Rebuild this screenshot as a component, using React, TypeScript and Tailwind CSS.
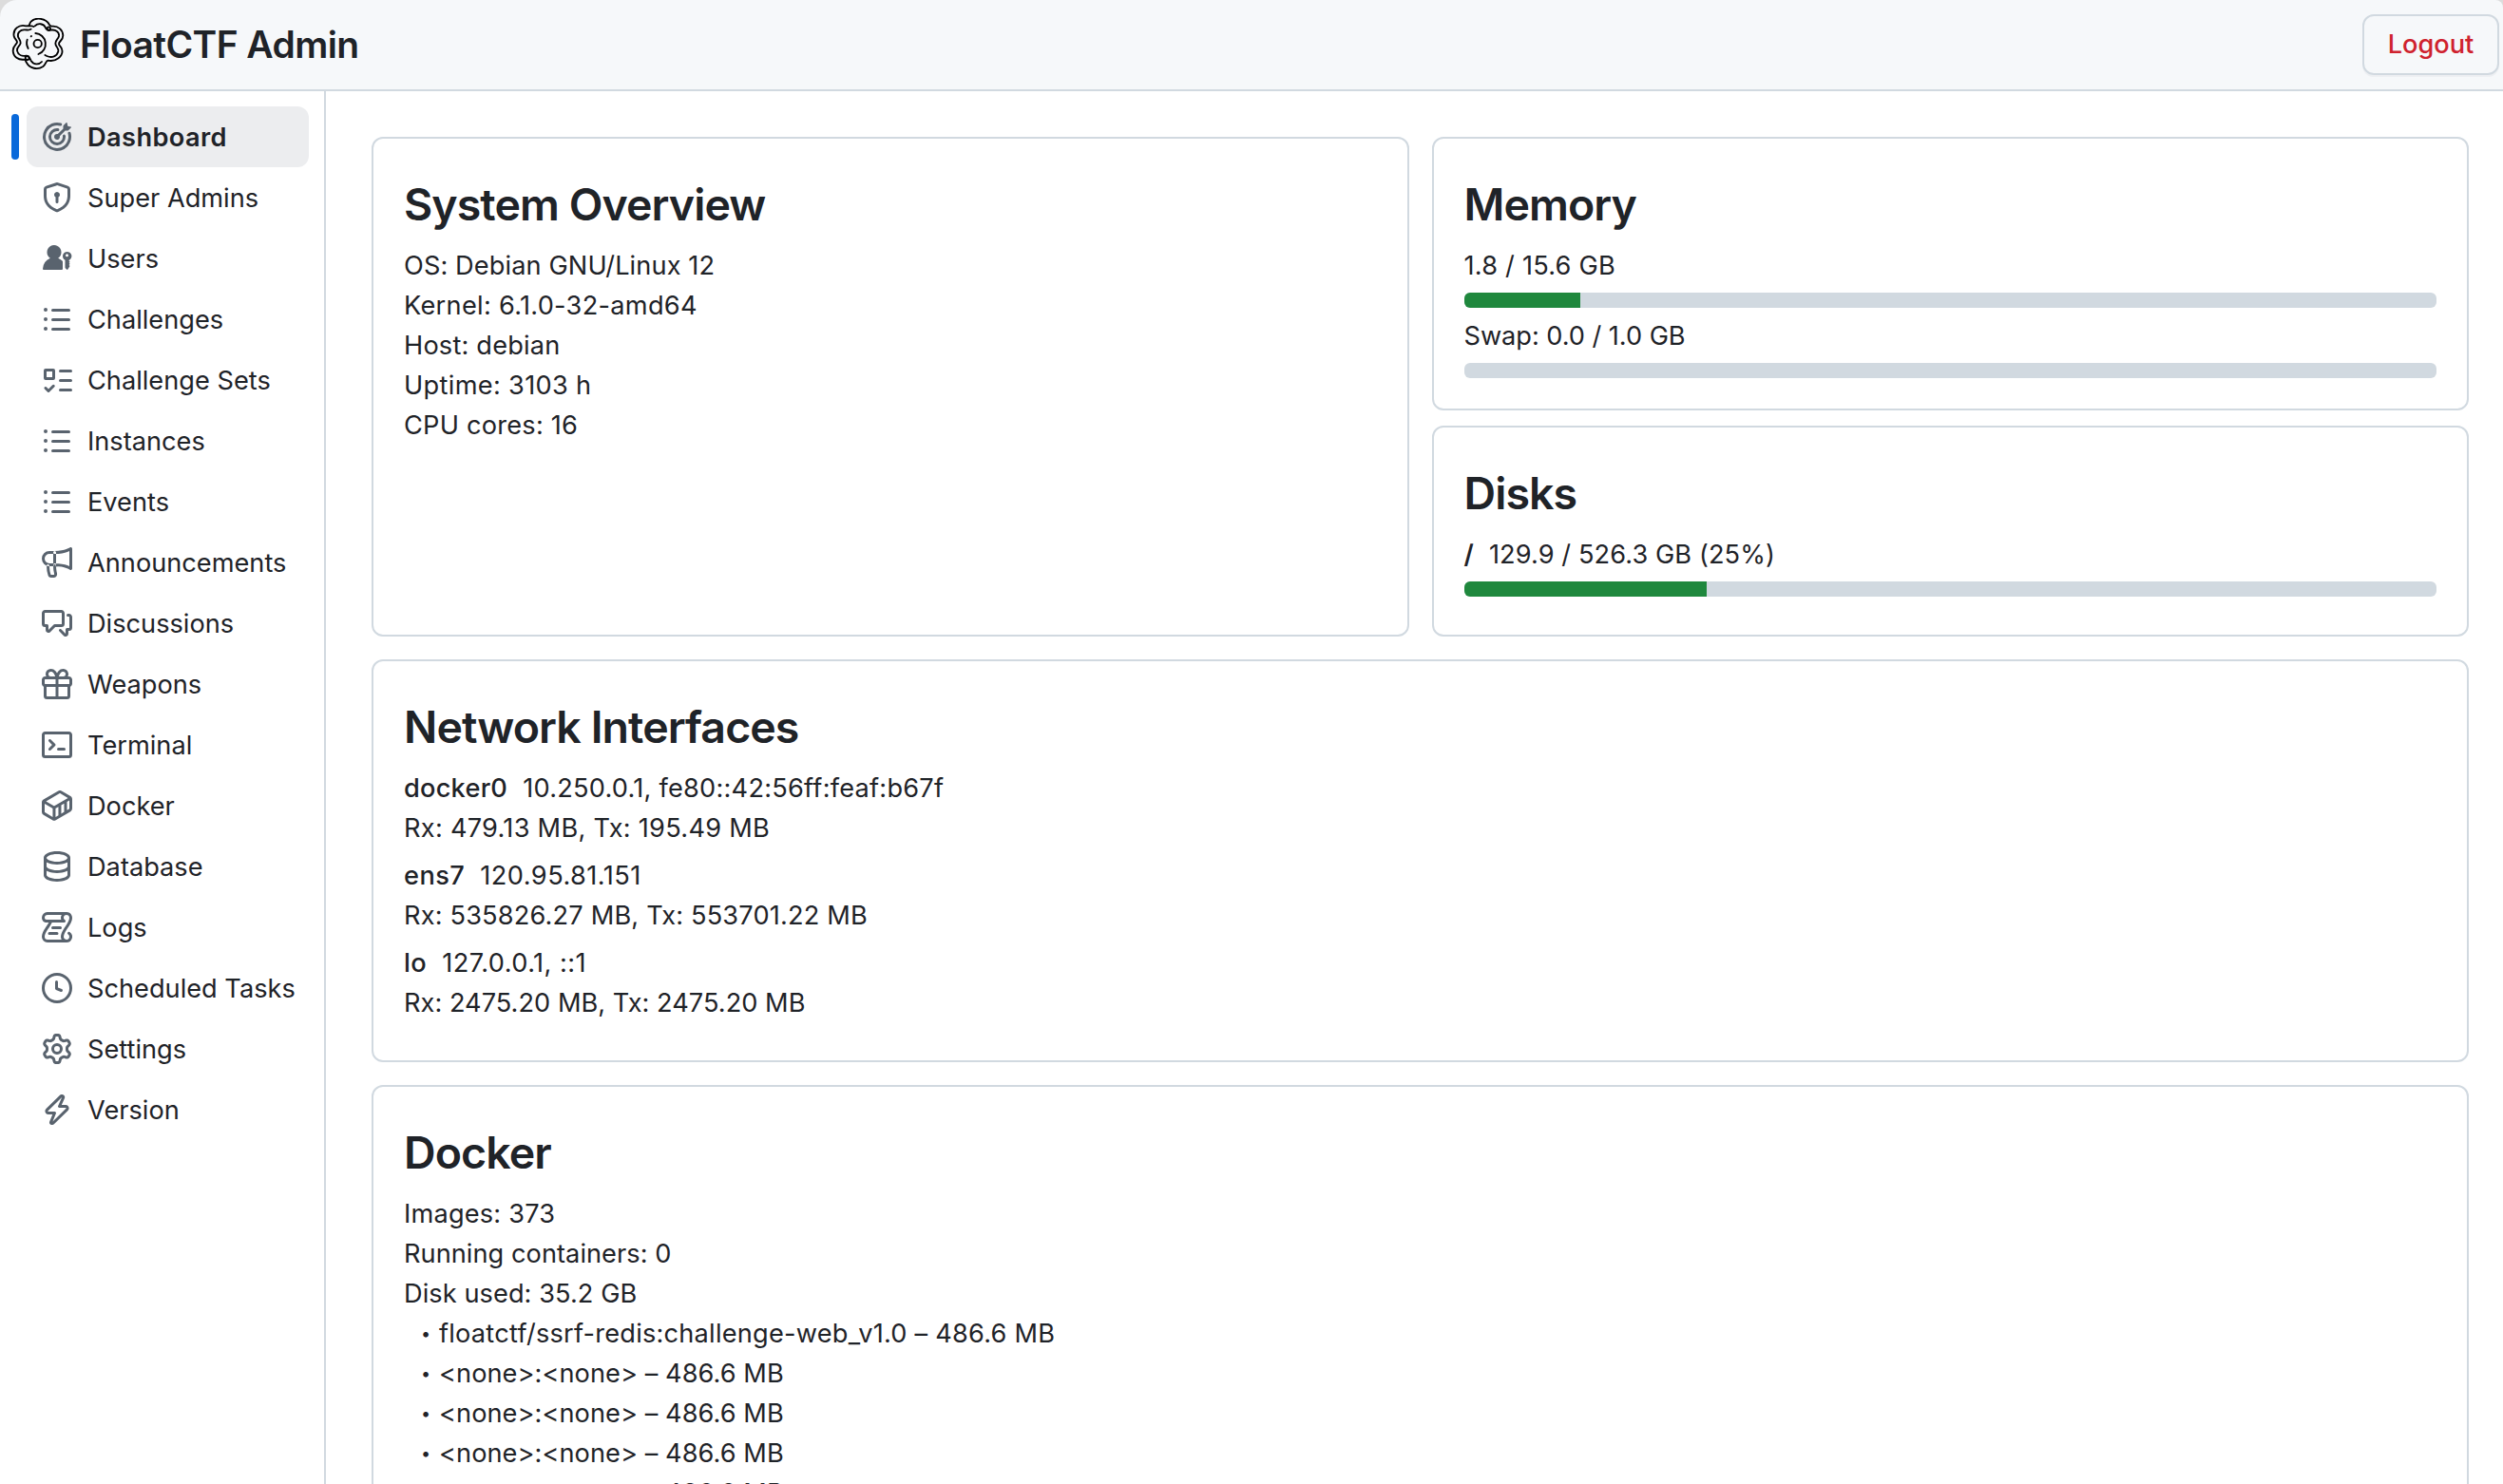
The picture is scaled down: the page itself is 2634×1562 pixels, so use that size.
import type { ReactNode } from "react";

const icons = {
  goal: "M13.637 2.363h-.001l1.676.335c.09.018.164.084.19.173a.25.25 0 0 1-.062.249l-1.373 1.374a.876.876 0 0 1-.619.256H12.31L9.45 7.611A1.5 1.5 0 1 1 6.5 8a1.501 1.501 0 0 1 1.889-1.449l2.861-2.862V2.552c0-.232.092-.455.256-.619L12.88.559a.25.25 0 0 1 .249-.062c.089.026.155.1.173.19ZM2 8a6 6 0 1 0 11.769-1.656.751.751 0 1 1 1.442-.413 7.502 7.502 0 0 1-12.513 7.371A7.501 7.501 0 0 1 10.069.789a.75.75 0 0 1-.413 1.442A6.001 6.001 0 0 0 2 8ZM5 8a3.002 3.002 0 0 0 4.699 2.476 3 3 0 0 0 1.28-2.827.748.748 0 0 1 1.045-.782.75.75 0 0 1 .445.61A4.5 4.5 0 1 1 8.516 3.53a.75.75 0 1 1-.17 1.49A3 3 0 0 0 5 8Z",
  shieldLock:
    "m8.533.133 5.25 1.68A1.75 1.75 0 0 1 15 3.48V7c0 1.566-.32 3.182-1.303 4.682-.983 1.498-2.585 2.813-5.032 3.855a1.697 1.697 0 0 1-1.33 0c-2.447-1.042-4.049-2.357-5.032-3.855C1.32 10.182 1 8.566 1 7V3.48a1.755 1.755 0 0 1 1.217-1.667l5.25-1.68a1.748 1.748 0 0 1 1.066 0Zm-.61 1.429.001.001-5.25 1.68a.251.251 0 0 0-.174.237V7c0 1.36.275 2.666 1.057 3.859.784 1.194 2.121 2.342 4.366 3.298a.196.196 0 0 0 .154 0c2.245-.957 3.582-2.103 4.366-3.297C13.225 9.666 13.5 8.358 13.5 7V3.48a.25.25 0 0 0-.174-.238l-5.25-1.68a.25.25 0 0 0-.153 0ZM9.5 6.5c0 .536-.286 1.032-.75 1.3v2.45a.75.75 0 0 1-1.5 0V7.8A1.5 1.5 0 1 1 9.5 6.5Z",
  passkey:
    "M2.743 4.757a3.757 3.757 0 1 1 5.851 3.119 5.991 5.991 0 0 1 2.15 1.383c.17.17.257.405.257.646v3.598a.5.5 0 0 1-.5.5H1a.5.5 0 0 1-.5-.5 6.5 6.5 0 0 1 3.906-5.627 3.754 3.754 0 0 1-1.663-3.119ZM15.7 6.727c0 .914-.522 1.706-1.284 2.092a.215.215 0 0 0-.122.192v.196c0 .057.023.112.063.152l.33.33a.2.2 0 0 1 0 .283l-.4.4.4.4a.2.2 0 0 1 0 .283l-.4.4.4.4a.2.2 0 0 1 0 .283l-.9 1.5a.6.6 0 0 1-.9 0l-.5-.5a.5.5 0 0 1-.14-.35V9a.215.215 0 0 0-.12-.192A2.345 2.345 0 1 1 15.7 6.727Zm-1.7-.4a.75.75 0 1 0-1.5 0 .75.75 0 0 0 1.5 0Z",
  list: "M5.75 2.5h8.5a.75.75 0 0 1 0 1.5h-8.5a.75.75 0 0 1 0-1.5Zm0 5h8.5a.75.75 0 0 1 0 1.5h-8.5a.75.75 0 0 1 0-1.5Zm0 5h8.5a.75.75 0 0 1 0 1.5h-8.5a.75.75 0 0 1 0-1.5ZM2 14a1 1 0 1 1 0-2 1 1 0 0 1 0 2Zm1-6a1 1 0 1 1-2 0 1 1 0 0 1 2 0ZM2 4a1 1 0 1 1 0-2 1 1 0 0 1 0 2Z",
  tasklist:
    "M2 2h4a1 1 0 0 1 1 1v4a1 1 0 0 1-1 1H2a1 1 0 0 1-1-1V3a1 1 0 0 1 1-1Zm4.655 8.595a.75.75 0 0 1 0 1.06L4.03 14.28a.75.75 0 0 1-1.06 0l-1.5-1.5a.749.749 0 0 1 .326-1.275.749.749 0 0 1 .734.215l.97.97 2.095-2.095a.75.75 0 0 1 1.06 0ZM9.75 2.5h5.5a.75.75 0 0 1 0 1.5h-5.5a.75.75 0 0 1 0-1.5Zm0 5h5.5a.75.75 0 0 1 0 1.5h-5.5a.75.75 0 0 1 0-1.5Zm0 5h5.5a.75.75 0 0 1 0 1.5h-5.5a.75.75 0 0 1 0-1.5Zm-7.25-9v3h3v-3Z",
  megaphone:
    "M3.25 9a.75.75 0 0 1 .75.75c0 2.142.456 3.828.733 4.653a.122.122 0 0 0 .05.064.212.212 0 0 0 .117.033h1.31c.085 0 .18-.042.258-.152a.45.45 0 0 0 .075-.366A16.743 16.743 0 0 1 6 9.75a.75.75 0 0 1 1.5 0c0 1.588.25 2.926.494 3.85.293 1.113-.504 2.4-1.783 2.4H4.9c-.686 0-1.35-.41-1.589-1.12A16.4 16.4 0 0 1 2.5 9.75.75.75 0 0 1 3.25 9ZM0 6a4 4 0 0 1 4-4h2.75a.75.75 0 0 1 .75.75v6.5a.75.75 0 0 1-.75.75H4a4 4 0 0 1-4-4Zm4-2.5a2.5 2.5 0 1 0 0 5h2v-5ZM15.59.082A.75.75 0 0 1 16 .75v10.5a.75.75 0 0 1-1.189.608l-.002-.001h.001l-.014-.01a5.775 5.775 0 0 0-.422-.25 10.63 10.63 0 0 0-1.469-.64C11.576 10.484 9.536 10 6.75 10a.75.75 0 0 1 0-1.5c2.964 0 5.174.516 6.658 1.043.423.151.787.302 1.092.443V2.014c-.305.14-.669.292-1.092.443C11.924 2.984 9.713 3.5 6.75 3.5a.75.75 0 0 1 0-1.5c2.786 0 4.826-.484 6.155-.957.665-.236 1.154-.47 1.47-.64.144-.077.284-.161.421-.25l.014-.01a.75.75 0 0 1 .78-.061Z",
  discussion:
    "M1.75 1h8.5c.966 0 1.75.784 1.75 1.75v5.5A1.75 1.75 0 0 1 10.25 10H7.061l-2.574 2.573A1.458 1.458 0 0 1 2 11.543V10h-.25A1.75 1.75 0 0 1 0 8.25v-5.5C0 1.784.784 1 1.75 1ZM1.5 2.75v5.5c0 .138.112.25.25.25h1a.75.75 0 0 1 .75.75v2.19l2.72-2.72a.749.749 0 0 1 .53-.22h3.5a.25.25 0 0 0 .25-.25v-5.5a.25.25 0 0 0-.25-.25h-8.5a.25.25 0 0 0-.25.25Zm13 2a.25.25 0 0 0-.25-.25h-.5a.75.75 0 0 1 0-1.5h.5c.966 0 1.75.784 1.75 1.75v5.5A1.75 1.75 0 0 1 14.25 12H14v1.543a1.458 1.458 0 0 1-2.487 1.03L9.22 12.28a.749.749 0 0 1 .326-1.275.749.749 0 0 1 .734.215l2.22 2.22v-2.19a.75.75 0 0 1 .75-.75h1a.25.25 0 0 0 .25-.25Z",
  gift: "M2 2.75A2.75 2.75 0 0 1 4.75 0c.983 0 1.873.42 2.57 1.232.268.318.497.668.68 1.042.183-.375.411-.725.68-1.044C9.376.42 10.266 0 11.25 0a2.75 2.75 0 0 1 2.45 4h.55c.966 0 1.75.784 1.75 1.75v2c0 .698-.409 1.301-1 1.582v4.918A1.75 1.75 0 0 1 13.25 16H2.75A1.75 1.75 0 0 1 1 14.25V9.332C.409 9.05 0 8.448 0 7.75v-2C0 4.784.784 4 1.75 4h.55c-.192-.375-.3-.8-.3-1.25ZM7.25 9.5H2.5v4.75c0 .138.112.25.25.25h4.5Zm1.5 0v5h4.5a.25.25 0 0 0 .25-.25V9.5Zm0-4V8h5.5a.25.25 0 0 0 .25-.25v-2a.25.25 0 0 0-.25-.25Zm-7 0a.25.25 0 0 0-.25.25v2c0 .138.112.25.25.25h5.5V5.5h-5.5Zm3-4a1.25 1.25 0 0 0 0 2.5h2.309c-.233-.818-.542-1.401-.878-1.793-.43-.502-.915-.707-1.431-.707ZM8.941 4h2.309a1.25 1.25 0 0 0 0-2.5c-.516 0-1 .205-1.43.707-.337.392-.646.975-.879 1.793Z",
  terminal:
    "M0 2.75C0 1.784.784 1 1.75 1h12.5c.966 0 1.75.784 1.75 1.75v10.5A1.75 1.75 0 0 1 14.25 15H1.75A1.75 1.75 0 0 1 0 13.25Zm1.75-.25a.25.25 0 0 0-.25.25v10.5c0 .138.112.25.25.25h12.5a.25.25 0 0 0 .25-.25V2.75a.25.25 0 0 0-.25-.25ZM7.25 8a.749.749 0 0 1-.22.53l-2.25 2.25a.749.749 0 0 1-1.275-.326.749.749 0 0 1 .215-.734L5.44 8 3.72 6.28a.749.749 0 0 1 .326-1.275.749.749 0 0 1 .734.215l2.25 2.25c.141.14.22.331.22.53Zm1.5 1.5h3a.75.75 0 0 1 0 1.5h-3a.75.75 0 0 1 0-1.5Z",
  container:
    "m10.41.24 4.711 2.774c.544.316.878.897.879 1.526v5.01a1.77 1.77 0 0 1-.88 1.53l-7.753 4.521-.002.001a1.769 1.769 0 0 1-1.774 0H5.59L.873 12.85A1.761 1.761 0 0 1 0 11.327V6.292c0-.304.078-.598.22-.855l.004-.005.01-.019c.15-.262.369-.486.64-.643L8.641.239a1.752 1.752 0 0 1 1.765 0l.002.001ZM9.397 1.534l-7.17 4.182 4.116 2.388a.27.27 0 0 0 .269 0l7.152-4.148-4.115-2.422a.252.252 0 0 0-.252 0Zm-7.768 10.02 4.1 2.393V9.474a1.807 1.807 0 0 1-.138-.072L1.5 7.029v4.298c0 .095.05.181.129.227Zm8.6.642 1.521-.887v-4.45l-1.521.882ZM7.365 9.402h.001c-.044.026-.09.049-.136.071v4.472l1.5-.875V8.61Zm5.885 1.032 1.115-.65h.002a.267.267 0 0 0 .133-.232V5.264l-1.25.725Z",
  database:
    "M1 3.5c0-.626.292-1.165.7-1.59.406-.422.956-.767 1.579-1.041C4.525.32 6.195 0 8 0c1.805 0 3.475.32 4.722.869.622.274 1.172.62 1.578 1.04.408.426.7.965.7 1.591v9c0 .626-.292 1.165-.7 1.59-.406.422-.956.767-1.579 1.041C11.476 15.68 9.806 16 8 16c-1.805 0-3.475-.32-4.721-.869-.623-.274-1.173-.62-1.579-1.04-.408-.426-.7-.965-.7-1.591Zm1.5 0c0 .133.058.318.282.551.227.237.591.483 1.101.707C4.898 5.205 6.353 5.5 8 5.5c1.646 0 3.101-.295 4.118-.742.508-.224.873-.471 1.1-.708.224-.232.282-.417.282-.55 0-.133-.058-.318-.282-.551-.227-.237-.591-.483-1.101-.707C11.102 1.795 9.647 1.5 8 1.5c-1.646 0-3.101.295-4.118.742-.508.224-.873.471-1.1.708-.224.232-.282.417-.282.55Zm0 4.5c0 .133.058.318.282.551.227.237.591.483 1.101.707C4.898 9.705 6.353 10 8 10c1.646 0 3.101-.295 4.118-.742.508-.224.873-.471 1.1-.708.224-.232.282-.417.282-.55V5.724c-.241.15-.503.286-.778.407C11.475 6.68 9.805 7 8 7c-1.805 0-3.475-.32-4.721-.869a6.15 6.15 0 0 1-.779-.407Zm0 2.225V12.5c0 .133.058.318.282.55.227.237.592.484 1.1.708 1.016.447 2.471.742 4.118.742 1.647 0 3.102-.295 4.117-.742.51-.224.874-.47 1.101-.707.224-.233.282-.418.282-.551v-2.275c-.241.15-.503.285-.778.406-1.247.549-2.917.869-4.722.869-1.805 0-3.475-.32-4.721-.869a6.327 6.327 0 0 1-.779-.406Z",
  log: "M5 8.25a.75.75 0 0 1 .75-.75h4a.75.75 0 0 1 0 1.5h-4A.75.75 0 0 1 5 8.25ZM4 10.5A.75.75 0 0 0 4 12h4a.75.75 0 0 0 0-1.5H4ZM13-.005c1.654 0 3 1.328 3 3 0 .982-.338 1.933-.783 2.818-.443.879-1.028 1.758-1.582 2.588l-.011.017c-.568.853-1.104 1.659-1.501 2.446-.398.789-.623 1.494-.623 2.136a1.5 1.5 0 1 0 2.333-1.248.75.75 0 0 1 .834-1.246A3 3 0 0 1 13 16H3a3 3 0 0 1-3-3c0-1.582.891-3.135 1.777-4.506.209-.322.418-.637.623-.946.473-.709.923-1.386 1.287-2.048H2.51c-.576 0-1.381-.133-1.907-.783A2.68 2.68 0 0 1 0 2.995a3 3 0 0 1 3-3Zm0 1.5a1.5 1.5 0 0 0-1.5 1.5c0 .476.223.834.667 1.132A.75.75 0 0 1 11.75 5.495H5.368c-.467 1.003-1.141 2.015-1.773 2.963-.192.289-.381.571-.558.845C2.13 10.711 1.5 11.916 1.5 13A1.5 1.5 0 0 0 3 14.5h7.401A2.989 2.989 0 0 1 10 13c0-.979.338-1.928.784-2.812.441-.874 1.023-1.748 1.575-2.576l.017-.026c.568-.853 1.103-1.658 1.501-2.448.398-.79.623-1.497.623-2.143 0-.838-.669-1.5-1.5-1.5Zm-10 0a1.5 1.5 0 0 0-1.5 1.5c0 .321.1.569.27.778.097.12.325.227.74.227h7.674A2.737 2.737 0 0 1 10 2.995c0-.546.146-1.059.401-1.5Z",
  clock:
    "M8 0a8 8 0 1 1 0 16A8 8 0 0 1 8 0ZM1.5 8a6.5 6.5 0 1 0 13 0 6.5 6.5 0 0 0-13 0Zm7-3.25v2.992l2.028.812a.75.75 0 0 1-.557 1.392l-2.5-1A.751.751 0 0 1 7 8.25v-3.5a.75.75 0 0 1 1.5 0Z",
  gear: "M8 0a8.2 8.2 0 0 1 .701.031C9.444.095 9.99.645 10.16 1.29l.288 1.107c.018.066.079.158.212.224.231.114.454.243.668.386.123.082.233.09.299.071l1.103-.303c.644-.176 1.392.021 1.82.63.27.385.506.792.704 1.218.315.675.111 1.422-.364 1.891l-.814.806c-.049.048-.098.147-.088.294.016.257.016.515 0 .772-.01.147.038.246.088.294l.814.806c.475.469.679 1.216.364 1.891a7.977 7.977 0 0 1-.704 1.217c-.428.61-1.176.807-1.82.63l-1.102-.302c-.067-.019-.177-.011-.3.071a5.909 5.909 0 0 1-.668.386c-.133.066-.194.158-.211.224l-.29 1.106c-.168.646-.715 1.196-1.458 1.26a8.006 8.006 0 0 1-1.402 0c-.743-.064-1.289-.614-1.458-1.26l-.289-1.106c-.018-.066-.079-.158-.212-.224a5.738 5.738 0 0 1-.668-.386c-.123-.082-.233-.09-.299-.071l-1.103.303c-.644.176-1.392-.021-1.82-.63a8.12 8.12 0 0 1-.704-1.218c-.315-.675-.111-1.422.363-1.891l.815-.806c.05-.048.098-.147.088-.294a6.214 6.214 0 0 1 0-.772c.01-.147-.038-.246-.088-.294l-.815-.806C.635 6.045.431 5.298.746 4.623a7.92 7.92 0 0 1 .704-1.217c.428-.61 1.176-.807 1.82-.63l1.102.302c.067.019.177.011.3-.071.214-.143.437-.272.668-.386.133-.066.194-.158.211-.224l.29-1.106C6.009.645 6.556.095 7.299.03 7.53.01 7.764 0 8 0Zm-.571 1.525c-.036.003-.108.036-.137.146l-.289 1.105c-.147.561-.549.967-.998 1.189-.173.086-.34.183-.5.29-.417.278-.97.423-1.529.27l-1.103-.303c-.109-.03-.175.016-.195.045-.22.312-.412.644-.573.99-.014.031-.021.11.059.19l.815.806c.411.406.562.957.53 1.456a4.709 4.709 0 0 0 0 .582c.032.499-.119 1.05-.53 1.456l-.815.806c-.081.08-.073.159-.059.19.162.346.353.677.573.989.02.03.085.076.195.046l1.102-.303c.56-.153 1.113-.008 1.53.27.161.107.328.204.501.29.447.222.85.629.997 1.189l.289 1.105c.029.109.101.143.137.146a6.6 6.6 0 0 0 1.142 0c.036-.003.108-.036.137-.146l.289-1.105c.147-.561.549-.967.998-1.189.173-.086.34-.183.5-.29.417-.278.97-.423 1.529-.27l1.103.303c.109.029.175-.016.195-.045.22-.313.411-.644.573-.99.014-.031.021-.11-.059-.19l-.815-.806c-.411-.406-.562-.957-.53-1.456a4.709 4.709 0 0 0 0-.582c-.032-.499.119-1.05.53-1.456l.815-.806c.081-.08.073-.159.059-.19a6.464 6.464 0 0 0-.573-.989c-.02-.03-.085-.076-.195-.046l-1.102.303c-.56.153-1.113.008-1.53-.27a4.44 4.44 0 0 0-.501-.29c-.447-.222-.85-.629-.997-1.189l-.289-1.105c-.029-.11-.101-.143-.137-.146a6.6 6.6 0 0 0-1.142 0ZM11 8a3 3 0 1 1-6 0 3 3 0 0 1 6 0ZM9.5 8a1.5 1.5 0 1 0-3.001.001A1.5 1.5 0 0 0 9.5 8Z",
  zap: "M9.504.43a1.516 1.516 0 0 1 2.437 1.713L10.415 5.5h2.123c1.57 0 2.346 1.909 1.22 3.004l-7.34 7.142a1.249 1.249 0 0 1-.871.354h-.302a1.25 1.25 0 0 1-1.157-1.723L5.633 10.5H3.462c-1.57 0-2.346-1.909-1.22-3.004L9.503.429Zm1.047 1.074L3.286 8.571A.25.25 0 0 0 3.462 9H6.75a.75.75 0 0 1 .694 1.034l-1.713 4.188 6.982-6.793A.25.25 0 0 0 12.538 7H9.25a.75.75 0 0 1-.683-1.06l2.008-4.418.003-.006a.036.036 0 0 0-.004-.009l-.006-.006-.008-.001c-.003 0-.006.002-.009.004Z",
};

interface NavEntry {
  label: string;
  icon: keyof typeof icons;
}

const navEntries: NavEntry[] = [
  { label: "Dashboard", icon: "goal" },
  { label: "Super Admins", icon: "shieldLock" },
  { label: "Users", icon: "passkey" },
  { label: "Challenges", icon: "list" },
  { label: "Challenge Sets", icon: "tasklist" },
  { label: "Instances", icon: "list" },
  { label: "Events", icon: "list" },
  { label: "Announcements", icon: "megaphone" },
  { label: "Discussions", icon: "discussion" },
  { label: "Weapons", icon: "gift" },
  { label: "Terminal", icon: "terminal" },
  { label: "Docker", icon: "container" },
  { label: "Database", icon: "database" },
  { label: "Logs", icon: "log" },
  { label: "Scheduled Tasks", icon: "clock" },
  { label: "Settings", icon: "gear" },
  { label: "Version", icon: "zap" },
];

const interfaces = [
  {
    name: "docker0",
    addresses: "10.250.0.1, fe80::42:56ff:feaf:b67f",
    traffic: "Rx: 479.13 MB, Tx: 195.49 MB",
    addressClass: "tracking-[0.23px]",
    trafficClass: "tracking-[0.27px]",
  },
  {
    name: "ens7",
    addresses: "120.95.81.151",
    traffic: "Rx: 535826.27 MB, Tx: 553701.22 MB",
    addressClass: "tracking-[0.45px]",
    trafficClass: "tracking-[0.16px]",
  },
  {
    name: "lo",
    addresses: "127.0.0.1, ::1",
    traffic: "Rx: 2475.20 MB, Tx: 2475.20 MB",
    addressClass: "tracking-[0.45px]",
    trafficClass: "tracking-[0.02px]",
  },
];

const images = [
  "floatctf/ssrf-redis:challenge-web_v1.0 – 486.6 MB",
  "<none>:<none> – 486.6 MB",
  "<none>:<none> – 486.6 MB",
  "<none>:<none> – 486.6 MB",
  "<none>:<none> – 486.6 MB",
];

function Logo() {
  return (
    <svg
      viewBox="36 57 168 168"
      className="size-14 shrink-0"
      fill="none"
      stroke="#000"
      strokeWidth="5.5"
      strokeLinecap="round"
      strokeLinejoin="round"
    >
      {/* outer petals */}
      <path d="M106 84C98 80 92 82 82 82C60 76 40 92 44 114C46 124 54 126 54 133C54 140 41 144 41 160C42 180 58 190 76 188C82 188 80 192 84 198C94 216 118 222 136 210C146 202 144 192 152 191C176 196 200 178 196 158C194 146 186 146 186 138C186 130 199 128 199 112C198 94 184 82 166 83C160 83 160 84 156 78C144 56 112 54 98 68C93 73 94 78 91 82" />
      {/* inner petals */}
      <path d="M110 82C120 72 138 74 143 86C146 94 152 98 160 95C176 92 188 102 186 114C184 124 175 126 175 137C175 148 186 150 184 162C180 178 164 184 148 177L142 174" />
      <path d="M98 92C92 97 86 94 78 94C64 93 54 104 57 116C60 124 66 128 65 136C63 146 52 148 54 160C57 174 70 178 82 176C92 175 94 184 98 192C106 204 122 206 132 195" />
      <circle cx="154" cy="90" r="5" />
      <circle cx="86" cy="183" r="6" />
      <circle cx="119" cy="138" r="12.500" />
      <path d="M112 105A34 34 0 0 1 121 171" />
      <path d="M86 125C83 134 84 144 89 153M98 115L99 114" />
    </svg>
  );
}

function Card({
  title,
  className,
  children,
}: {
  title: string;
  className: string;
  children: ReactNode;
}) {
  return (
    <section
      className={`rounded-xl border-2 border-[#d1d9e0] bg-white px-8 pt-[33px] ${className}`}
    >
      <h2 className="mb-2 text-[46.5px] leading-[72px] font-semibold tracking-[-0.93px]">
        {title}
      </h2>
      {children}
    </section>
  );
}

function ProgressBar({ value }: { value: number }) {
  return (
    <div className="mt-[7px] mb-[9px] h-4 overflow-hidden rounded-md bg-[#d1d9e0]">
      <div className="h-full bg-[#1f883d]" style={{ width: `${value}%` }} />
    </div>
  );
}

export default function App() {
  return (
    <div className="flex h-[1562px] w-[2634px] flex-col overflow-hidden bg-white font-['Inter',sans-serif] text-[27.2px] leading-[42px] text-[#1f2328]">
      <div className="bg-[#dcdcdc]">
        <header className="flex h-24 items-center justify-between rounded-tl-[18px] rounded-tr-lg border-b-2 border-[#d1d9e0] bg-[#f6f8fa] pr-1 pl-3">
          <div className="flex items-center gap-4">
            <Logo />
            <h1 className="text-[39px] font-semibold tracking-[-0.6px]">
              FloatCTF Admin
            </h1>
          </div>
          <button className="h-16 w-36 rounded-xl border-2 border-[#d1d9e0] font-medium text-[#cf222e] shadow-[0_2px_0_rgba(31,35,40,0.04)]">
            Logout
          </button>
        </header>
      </div>
      <div className="flex min-h-0 flex-1">
        <nav className="w-[343px] shrink-0 border-r-2 border-[#d1d9e0] px-3 pt-4">
          {navEntries.map((entry, index) => (
            <div key={entry.label} className="flex h-16 items-center gap-2">
              <span
                className={`h-12 w-2 rounded-full ${index === 0 ? "bg-[#0969da]" : ""}`}
              />
              <a
                className={`flex h-16 w-[297px] items-center gap-4 rounded-xl pl-4 whitespace-nowrap ${index === 0 ? "bg-[#ecedef] font-semibold tracking-[0.4px]" : ""}`}
              >
                <svg
                  viewBox="0 0 16 16"
                  className="size-8 shrink-0 fill-[#59636e]"
                >
                  <path fillRule="evenodd" d={icons[entry.icon]} />
                </svg>
                <span className="pt-0.5">{entry.label}</span>
              </a>
            </div>
          ))}
        </nav>
        <main className="flex flex-1 flex-col gap-6 pt-12 pr-9 pl-12">
          <div className="grid grid-cols-2 gap-6">
            <Card title="System Overview" className="h-[526px]">
              <p className="tracking-[0.1px]">OS: Debian GNU/Linux 12</p>
              <p className="tracking-[0.28px]">Kernel: 6.1.0-32-amd64</p>
              <p className="tracking-[0.18px]">Host: debian</p>
              <p className="tracking-[0.32px]">Uptime: 3103 h</p>
              <p className="tracking-[0.22px]">CPU cores: 16</p>
            </Card>
            <div className="flex flex-col gap-4">
              <Card title="Memory" className="h-[288px]">
                <p className="tracking-[0.2px]">1.8 / 15.6 GB</p>
                <ProgressBar value={12} />
                <p className="tracking-[-0.05px]">Swap: 0.0 / 1.0 GB</p>
                <ProgressBar value={0} />
              </Card>
              <Card title="Disks" className="h-[222px]">
                <p className="tracking-[0.08px]">
                  <span className="mr-4 font-semibold">/</span>129.9 / 526.3 GB
                  (25%)
                </p>
                <ProgressBar value={25} />
              </Card>
            </div>
          </div>
          <Card title="Network Interfaces" className="h-[424px] shrink-0">
            <div className="flex flex-col gap-2">
              {interfaces.map((item) => (
                <div key={item.name}>
                  <p className={item.addressClass}>
                    <span className="mr-4 font-medium">{item.name}</span>
                    {item.addresses}
                  </p>
                  <p className={item.trafficClass}>{item.traffic}</p>
                </div>
              ))}
            </div>
          </Card>
          <Card title="Docker" className="h-[500px] shrink-0">
            <p className="tracking-[0.18px]">Images: 373</p>
            <p className="tracking-[0.04px]">Running containers: 0</p>
            <p className="tracking-[0.06px]">Disk used: 35.2 GB</p>
            {images.map((image, index) => (
              <p
                key={index}
                className={`flex pl-[18px] ${index === 0 ? "tracking-[0.22px]" : "tracking-[0.05px]"}`}
              >
                <span className="w-[19px] text-[18px]">•</span>
                {image}
              </p>
            ))}
          </Card>
        </main>
      </div>
    </div>
  );
}
